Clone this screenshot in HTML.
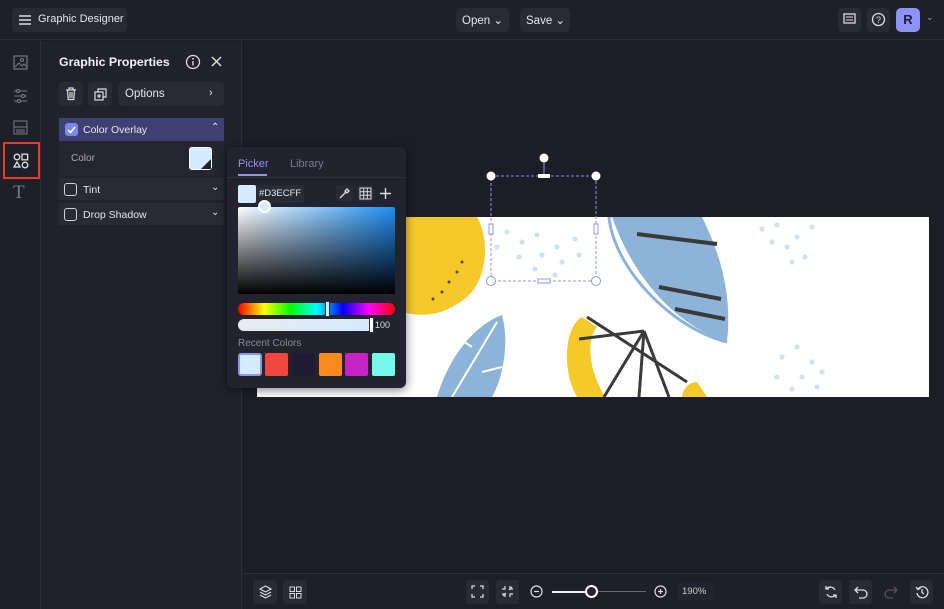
<!DOCTYPE html>
<html><head><style>
*{box-sizing:border-box;margin:0;padding:0}
body{width:944px;height:609px;background:#1c1d27;font-family:"Liberation Sans",sans-serif;color:#e6e6ee;position:relative;overflow:hidden;font-size:11.5px}
.abs{position:absolute}
.btn{position:absolute;background:#282a36;border-radius:4px}
.top{left:0;top:0;width:944px;height:40px;border-bottom:1px solid #2c2e3a;background:#1e1f29}
.rail{left:0;top:41px;width:41px;height:568px;border-right:1px solid #2c2e3a;background:#1e1f29}
.panel{left:41px;top:41px;width:201px;height:568px;border-right:1px solid #2c2e3a;background:#20212c}
.bottom{left:242px;top:573px;width:702px;height:36px;border-top:1px solid #2c2e3a;background:#1e1f29}
.row{position:absolute;left:59px;width:165px;background:#282a36}
.cb{position:absolute;width:13px;height:13px;border:1.5px solid #cfd0da;border-radius:3px}
</style></head><body>
<div class="abs top"></div>
<div class="btn" style="left:12px;top:8px;width:115px;height:24px"></div>
<svg class="abs" style="left:18px;top:13px" width="14" height="14"><path d="M1 3h12M1 7h12M1 11h12" stroke="#ddd" stroke-width="1.5"/></svg>
<div class="abs" style="left:38px;top:13px;font-size:11px">Graphic Designer</div>
<div class="btn" style="left:456px;top:8px;width:53px;height:24px"></div>
<div class="abs" style="left:462px;top:13px">Open ⌄</div>
<div class="btn" style="left:520px;top:8px;width:50px;height:24px"></div>
<div class="abs" style="left:526px;top:13px">Save ⌄</div>
<div class="btn" style="left:838px;top:8px;width:23px;height:24px"></div>
<svg class="abs" style="left:843px;top:13px" width="13" height="13"><rect x="1" y="1" width="11" height="9" fill="none" stroke="#ddd" stroke-width="1.3"/><path d="M3 4h7M3 7h7" stroke="#ddd"/></svg>
<div class="btn" style="left:867px;top:8px;width:23px;height:24px"></div>
<svg class="abs" style="left:871px;top:12px" width="15" height="15"><circle cx="7.5" cy="7.5" r="6" fill="none" stroke="#ddd" stroke-width="1.3"/><text x="5" y="11" font-size="9" fill="#ddd" font-family="Liberation Sans">?</text></svg>
<div class="abs" style="left:896px;top:8px;width:24px;height:24px;background:#8c93f5;border-radius:5px;color:#1c1d40;font-weight:bold;font-size:13px;text-align:center;line-height:24px">R</div>
<div class="abs" style="left:926px;top:12px;font-size:9px;color:#aaa">⌄</div>

<div class="abs rail"></div>
<svg class="abs" style="left:13px;top:55px" width="15" height="15"><rect x="1" y="1" width="13" height="13" fill="none" stroke="#777a88" stroke-width="1.2"/><path d="M2 12l4-4 3 3 2-2 3 3" stroke="#777a88" fill="none"/><circle cx="9" cy="5" r="1.5" fill="none" stroke="#777a88"/></svg>
<svg class="abs" style="left:13px;top:88px" width="15" height="15"><path d="M1 3h13M1 8h13M1 13h13" stroke="#777a88"/><circle cx="5" cy="3" r="1.5" fill="#1e1f29" stroke="#777a88"/><circle cx="10" cy="8" r="1.5" fill="#1e1f29" stroke="#777a88"/><circle cx="6" cy="13" r="1.5" fill="#1e1f29" stroke="#777a88"/></svg>
<svg class="abs" style="left:13px;top:120px" width="15" height="15"><rect x="1" y="1" width="13" height="13" fill="none" stroke="#777a88"/><path d="M1 7h13M3 10h9M3 12h9" stroke="#777a88"/></svg>
<div class="abs" style="left:3px;top:142px;width:37px;height:37px;border:2px solid #e8392c"></div>
<svg class="abs" style="left:13px;top:153px" width="16" height="16"><circle cx="4" cy="4" r="2.8" fill="none" stroke="#ddd" stroke-width="1.3"/><rect x="9" y="1.2" width="5.6" height="5.6" fill="none" stroke="#ddd" stroke-width="1.3"/><path d="M4 9l3 5H1z" fill="none" stroke="#ddd" stroke-width="1.3"/><circle cx="12" cy="12" r="2.8" fill="none" stroke="#ddd" stroke-width="1.3"/></svg>
<div class="abs" style="left:13px;top:182px;font-family:'Liberation Serif',serif;font-size:19px;color:#777a88">T</div>

<div class="abs panel"></div>
<div class="abs" style="left:59px;top:55px;font-size:12.3px;font-weight:bold;color:#f0f0f5">Graphic Properties</div>
<svg class="abs" style="left:185px;top:54px" width="16" height="16"><circle cx="8" cy="8" r="6.5" fill="none" stroke="#ddd" stroke-width="1.3"/><path d="M8 7v4.5" stroke="#ddd" stroke-width="1.4"/><circle cx="8" cy="4.8" r=".9" fill="#ddd"/></svg>
<svg class="abs" style="left:210px;top:55px" width="13" height="13"><path d="M2 2l9 9M11 2l-9 9" stroke="#ddd" stroke-width="1.5"/></svg>
<div class="btn" style="left:59px;top:82px;width:24px;height:24px"></div>
<svg class="abs" style="left:65px;top:87px" width="12" height="14"><path d="M1 3h10M4 3V1h4v2M2.5 3l.7 9.5h5.6L9.5 3M5 5v6M7 5v6" fill="none" stroke="#ddd" stroke-width="1.2"/></svg>
<div class="btn" style="left:88px;top:82px;width:24px;height:24px"></div>
<svg class="abs" style="left:94px;top:88px" width="13" height="13"><rect x="1" y="4" width="8" height="8" fill="none" stroke="#ddd" stroke-width="1.2"/><path d="M4 4V1h8v8H9M5 6v4M3 8h4" fill="none" stroke="#ddd" stroke-width="1.2"/></svg>
<div class="btn" style="left:118px;top:82px;width:106px;height:24px"></div>
<div class="abs" style="left:125px;top:88px">Options</div>
<div class="abs" style="left:209px;top:87px;font-size:11px">›</div>
<div class="row" style="top:118px;height:23px;background:#403f72"></div>
<div class="cb" style="left:65px;top:123px;background:#7c86f0;border-color:#7c86f0"></div>
<svg class="abs" style="left:66px;top:124px" width="11" height="11"><path d="M2 6l2.5 2.5L9 3" stroke="#fff" fill="none" stroke-width="1.5"/></svg>
<div class="abs" style="left:83px;top:124px;font-size:10.5px">Color Overlay</div>
<div class="abs" style="left:211px;top:122px;font-size:10px">⌃</div>
<div class="row" style="top:141px;height:35px;background:#242531"></div>
<div class="abs" style="left:71px;top:153px;font-size:10px;color:#aaa">Color</div>
<div class="abs" style="left:189px;top:147px;width:23px;height:23px;background:#d3ecff;border-radius:3px;border:1px solid #fff"></div>
<svg class="abs" style="left:201px;top:159px" width="10" height="10"><path d="M10 0V10H0z" fill="#222"/></svg>
<div class="row" style="top:178px;height:22px"></div>
<div class="cb" style="left:64px;top:183px"></div>
<div class="abs" style="left:83px;top:184px;font-size:10.5px">Tint</div>
<div class="abs" style="left:211px;top:182px;font-size:10px">⌄</div>
<div class="row" style="top:203px;height:22px"></div>
<div class="cb" style="left:64px;top:208px"></div>
<div class="abs" style="left:83px;top:209px;font-size:10.5px">Drop Shadow</div>
<div class="abs" style="left:211px;top:207px;font-size:10px">⌄</div>

<!-- canvas image -->
<svg class="abs" style="left:257px;top:217px" width="672" height="180" viewBox="0 0 672 180">
<rect width="672" height="180" fill="#fff"/>
<path d="M145 0h75c12 20 12 60-10 80-25 20-45 20-65 15z" fill="#f6c92a"/>
<g fill="#5a4a2a"><circle cx="205" cy="45" r="1.5"/><circle cx="200" cy="55" r="1.5"/><circle cx="192" cy="65" r="1.5"/><circle cx="185" cy="75" r="1.5"/><circle cx="176" cy="82" r="1.5"/></g>
<path d="M355 0h90c20 40 30 80 25 125-45-15-90-55-115-125z" fill="#8db4d8"/>
<path d="M352 0c5 50 60 110 118 125" fill="none" stroke="#8db4d8" stroke-width="3"/>
<path d="M380 17l80 10M402 70l62 12M418 92l50 10" stroke="#3a3a3a" stroke-width="4"/>
<path d="M180 180c15-50 45-75 65-82 8 30 0 65-10 82z" fill="#8db4d8"/>
<path d="M195 180l45-75M215 130l-15-10M225 155l20-5" stroke="#fff" stroke-width="2"/>
<path d="M325 100c-18 10-20 55-5 80h28c-15-25-20-55-8-70z" fill="#f6c92a"/>
<path d="M440 165c-10 0-15 10-15 15h25z" fill="#f6c92a"/>
<path d="M330 100l100 65M322 122l65-8M387 114l-40 66M387 114l-5 66M387 114l25 66" stroke="#3a3a3a" stroke-width="3"/>
<g fill="#cfe3f5"><circle cx="250" cy="15" r="2.6"/><circle cx="265" cy="25" r="2.6"/><circle cx="280" cy="18" r="2.6"/><circle cx="300" cy="30" r="2.6"/><circle cx="318" cy="22" r="2.6"/><circle cx="262" cy="40" r="2.6"/><circle cx="285" cy="38" r="2.6"/><circle cx="305" cy="45" r="2.6"/><circle cx="322" cy="38" r="2.6"/><circle cx="278" cy="52" r="2.6"/><circle cx="298" cy="58" r="2.6"/><circle cx="240" cy="30" r="2.6"/><circle cx="505" cy="12" r="2.6"/><circle cx="520" cy="8" r="2.6"/><circle cx="540" cy="20" r="2.6"/><circle cx="555" cy="10" r="2.6"/><circle cx="530" cy="30" r="2.6"/><circle cx="548" cy="40" r="2.6"/><circle cx="515" cy="25" r="2.6"/><circle cx="535" cy="45" r="2.6"/><circle cx="525" cy="140" r="2.6"/><circle cx="540" cy="130" r="2.6"/><circle cx="555" cy="145" r="2.6"/><circle cx="520" cy="160" r="2.6"/><circle cx="545" cy="160" r="2.6"/><circle cx="565" cy="155" r="2.6"/><circle cx="535" cy="172" r="2.6"/><circle cx="560" cy="170" r="2.6"/></g>
</svg>
<!-- selection -->
<svg class="abs" style="left:484px;top:150px" width="120" height="140">
<g stroke="#8f95e8" fill="none" stroke-dasharray="3 2"><rect x="7" y="26" width="105" height="105"/></g>
<path d="M60 12v14" stroke="#8f95e8"/>
<circle cx="60" cy="8" r="4.5" fill="#fff"/>
<rect x="54" y="24" width="12" height="4" fill="#fff"/>
<circle cx="7" cy="26" r="4.5" fill="#fff"/><circle cx="112" cy="26" r="4.5" fill="#fff"/>
<circle cx="7" cy="131" r="4.5" fill="#fff" stroke="#8f95e8"/><circle cx="112" cy="131" r="4.5" fill="#fff" stroke="#8f95e8"/>
<rect x="5" y="74" width="4" height="10" fill="#fff" stroke="#8f95e8"/><rect x="110" y="74" width="4" height="10" fill="#fff" stroke="#8f95e8"/>
<rect x="54" y="129" width="12" height="4" fill="#fff" stroke="#8f95e8"/>
</svg>

<!-- picker -->
<div class="abs" style="left:227px;top:147px;width:179px;height:241px;background:#22232e;border-radius:6px;box-shadow:0 2px 10px rgba(0,0,0,.5)"></div>
<div class="abs" style="left:238px;top:158px;font-size:11px;color:#8f95e8">Picker</div>
<div class="abs" style="left:238px;top:174px;width:29px;height:2px;background:#8f95e8"></div>
<div class="abs" style="left:290px;top:158px;font-size:11px;color:#777a88">Library</div>
<div class="abs" style="left:227px;top:177px;width:179px;height:1px;background:#2e303c"></div>
<div class="abs" style="left:238px;top:185px;width:18px;height:18px;background:#d3ecff;border-radius:2px"></div>
<div class="abs" style="left:256px;top:185px;width:48px;height:18px;background:#282a36"></div>
<div class="abs" style="left:259px;top:188px;font-size:9.5px">#D3ECFF</div>
<div class="btn" style="left:336px;top:185px;width:17px;height:17px"></div>
<svg class="abs" style="left:338px;top:187px" width="13" height="13"><path d="M2 11l6-6M9 2l2 2-2 2-2-2z" stroke="#ddd" stroke-width="1.3" fill="none"/></svg>
<div class="btn" style="left:357px;top:185px;width:17px;height:17px"></div>
<svg class="abs" style="left:359px;top:187px" width="13" height="13"><rect x="1" y="1" width="11" height="11" fill="none" stroke="#ddd"/><path d="M4.7 1v11M8.3 1v11M1 4.7h11M1 8.3h11" stroke="#ddd"/></svg>
<svg class="abs" style="left:379px;top:187px" width="13" height="13"><path d="M6.5 1v11M1 6.5h11" stroke="#ddd" stroke-width="1.4"/></svg>
<div class="abs" style="left:238px;top:207px;width:157px;height:87px;background:linear-gradient(to bottom,rgba(0,0,0,0),#000),linear-gradient(to right,#fff,#1e8cf0);border-radius:2px"></div>
<div class="abs" style="left:258px;top:200px;width:13px;height:13px;border-radius:50%;background:#d3ecff;border:2px solid #fff"></div>
<div class="abs" style="left:238px;top:303px;width:157px;height:12px;border-radius:6px;background:linear-gradient(to right,#f00,#ff0,#0f0,#0ff,#00f,#f0f,#f00)"></div>
<div class="abs" style="left:325px;top:301px;width:5px;height:16px;background:#d3ecff;border:1px solid #333"></div>
<div class="abs" style="left:238px;top:319px;width:134px;height:12px;border-radius:6px 0 0 6px;background:linear-gradient(to right,#e8eaee,#d3ecff)"></div>
<div class="abs" style="left:369px;top:317px;width:5px;height:16px;background:#fff;border:1px solid #333"></div>
<div class="abs" style="left:375px;top:320px;font-size:9px;color:#ddd">100</div>
<div class="abs" style="left:238px;top:338px;font-size:10px;color:#888b98">Recent Colors</div>
<div class="abs" style="left:238px;top:353px;width:24px;height:23px;background:#d3ecff;border:2px solid #8f95e8;border-radius:3px"></div>
<div class="abs" style="left:265px;top:353px;width:23px;height:23px;background:#f0463d;border-radius:2px"></div>
<div class="abs" style="left:292px;top:353px;width:23px;height:23px;background:#1e1b33;border-radius:2px"></div>
<div class="abs" style="left:319px;top:353px;width:23px;height:23px;background:#fb8a1e;border-radius:2px"></div>
<div class="abs" style="left:345px;top:353px;width:23px;height:23px;background:#c623c6;border-radius:2px"></div>
<div class="abs" style="left:372px;top:353px;width:23px;height:23px;background:#74f9e9;border-radius:2px"></div>

<!-- bottom bar -->
<div class="abs bottom"></div>
<div class="btn" style="left:253px;top:580px;width:24px;height:24px"></div>
<svg class="abs" style="left:259px;top:585px" width="13" height="14"><path d="M6.5 1l5.5 3-5.5 3-5.5-3z M1 7l5.5 3 5.5-3M1 10l5.5 3 5.5-3" fill="none" stroke="#ddd" stroke-width="1.1"/></svg>
<div class="btn" style="left:283px;top:580px;width:24px;height:24px"></div>
<svg class="abs" style="left:289px;top:586px" width="13" height="13"><rect x="1" y="1" width="4.5" height="4.5" fill="none" stroke="#ddd"/><rect x="7.5" y="1" width="4.5" height="4.5" fill="none" stroke="#ddd"/><rect x="1" y="7.5" width="4.5" height="4.5" fill="none" stroke="#ddd"/><rect x="7.5" y="7.5" width="4.5" height="4.5" fill="none" stroke="#ddd"/></svg>
<div class="btn" style="left:466px;top:580px;width:23px;height:24px"></div>
<svg class="abs" style="left:471px;top:585px" width="13" height="13"><path d="M1 4V1h3M9 1h3v3M12 9v3H9M4 12H1V9" fill="none" stroke="#ddd" stroke-width="1.3"/></svg>
<div class="btn" style="left:496px;top:580px;width:23px;height:24px"></div>
<svg class="abs" style="left:501px;top:585px" width="13" height="13"><path d="M1 4h3V1M9 1v3h3M12 9H9v3M4 12V9H1M8 5l3-3M5 8l-3 3" fill="none" stroke="#ddd" stroke-width="1.2"/></svg>
<svg class="abs" style="left:530px;top:585px" width="13" height="13"><circle cx="6.5" cy="6.5" r="5.5" fill="none" stroke="#ddd" stroke-width="1.2"/><path d="M4 6.5h5" stroke="#ddd" stroke-width="1.2"/></svg>
<div class="abs" style="left:552px;top:591px;width:40px;height:2px;background:#eee"></div>
<div class="abs" style="left:592px;top:591px;width:54px;height:1px;background:#666"></div>
<div class="abs" style="left:585px;top:585px;width:13px;height:13px;border-radius:50%;background:#22232e;border:2px solid #fff"></div>
<svg class="abs" style="left:654px;top:585px" width="13" height="13"><circle cx="6.5" cy="6.5" r="5.5" fill="none" stroke="#ddd" stroke-width="1.2"/><path d="M4 6.5h5M6.5 4v5" stroke="#ddd" stroke-width="1.2"/></svg>
<div class="abs" style="left:677px;top:583px;width:37px;height:17px;background:#23242f"></div>
<div class="abs" style="left:682px;top:586px;font-size:9.5px;color:#ccc">190%</div>
<div class="btn" style="left:819px;top:580px;width:23px;height:24px"></div>
<svg class="abs" style="left:824px;top:585px" width="14" height="14"><path d="M11 5A5 5 0 0 0 2.5 4M3 9a5 5 0 0 0 8.5 1M2 1v3h3M12 13v-3H9" fill="none" stroke="#ddd" stroke-width="1.3"/></svg>
<div class="btn" style="left:849px;top:580px;width:23px;height:24px"></div>
<svg class="abs" style="left:854px;top:585px" width="14" height="14"><path d="M4 2L1 5l3 3M1 5h8a4 4 0 0 1 0 8H5" fill="none" stroke="#ddd" stroke-width="1.3"/></svg>
<svg class="abs" style="left:884px;top:585px" width="14" height="14"><path d="M10 2l3 3-3 3M13 5H5a4 4 0 0 0 0 8h4" fill="none" stroke="#555" stroke-width="1.3"/></svg>
<div class="btn" style="left:910px;top:580px;width:23px;height:24px"></div>
<svg class="abs" style="left:915px;top:585px" width="14" height="14"><path d="M3 4a5.5 5.5 0 1 1-1 4M1 2l2 2.5 2.5-1.5M7 4v3.5l2 1.5" fill="none" stroke="#ddd" stroke-width="1.3"/></svg>
</body></html>
